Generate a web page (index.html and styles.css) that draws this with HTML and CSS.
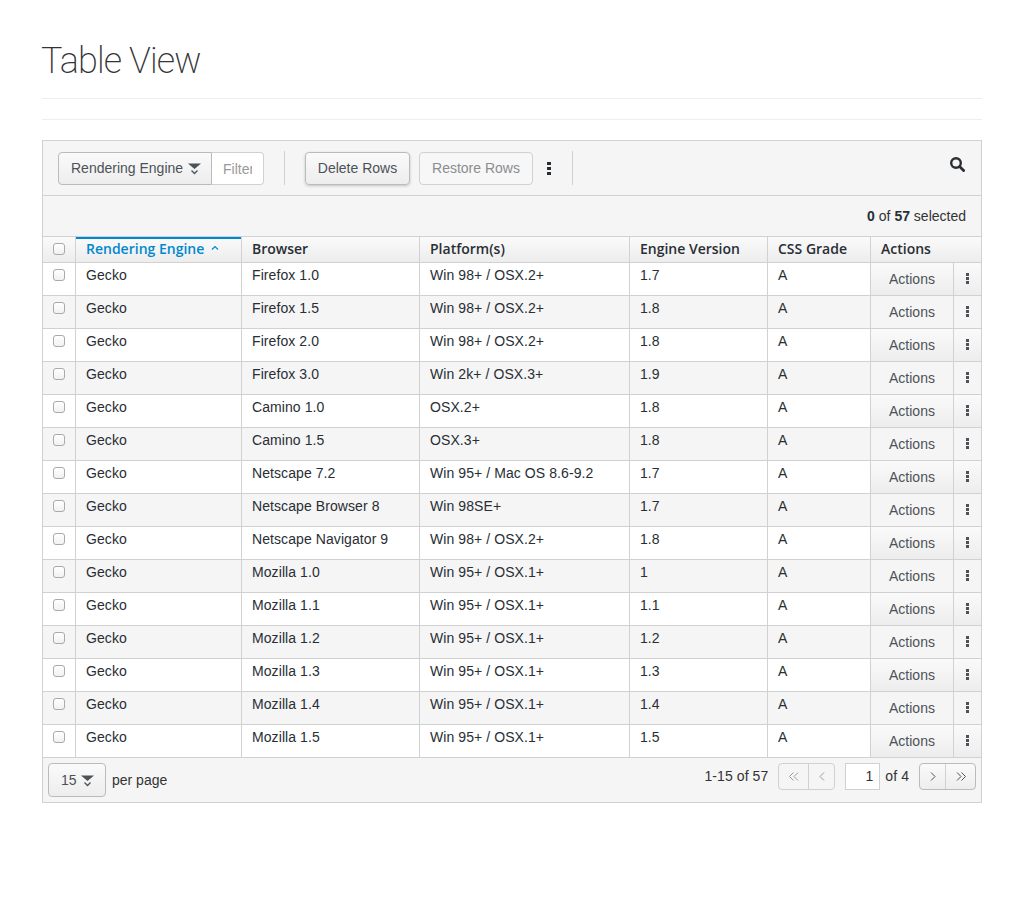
FILE: index.html
```html
<!DOCTYPE html>
<html lang="en">
<head>
<meta charset="utf-8">
<title>Table View</title>
<link rel="stylesheet" href="styles.css">
</head>
<body>
<main class="page">
  <header class="page-header"><h1>Table View</h1></header>
  <hr class="rule">
  <section class="card">
    <div class="toolbar">
      <div class="filter">
        <button class="btn filter-btn">Rendering Engine <svg class="caret" width="14" height="14" viewBox="0 0 14 14"><path d="M0 1.5h13L6.5 7z" fill="#4d5258"/><path d="M3.5 8.500l3 3 3-3" fill="none" stroke="#4d5258" stroke-width="1.3"/></svg></button>
        <div class="filter-input"><span>Filter</span></div>
      </div>
      <span class="divider divider-a"></span>
      <button class="btn delete">Delete Rows</button>
      <button class="btn restore">Restore Rows</button>
      <span class="kebab-wrap"><span class="kebab big"></span></span>
      <span class="divider divider-b"></span>
      <svg class="search" width="15" height="15" viewBox="0 0 15 15"><circle cx="6" cy="6" r="4.800" fill="none" stroke="#292e34" stroke-width="2.400"/><path d="M9.600 9.600l4 4" stroke="#292e34" stroke-width="2.800" stroke-linecap="round"/></svg>
    </div>
    <div class="selected"><span><b>0</b> of <b>57</b> selected</span></div>
    <table class="grid">
      <colgroup>
        <col class="w-check"><col class="w-engine"><col class="w-browser"><col class="w-platform"><col class="w-version"><col class="w-grade"><col class="w-act"><col class="w-more">
      </colgroup>
      <thead>
        <tr>
          <th class="c-check"><span class="check"></span></th>
          <th class="sorted">Rendering Engine <svg class="sort" width="8" height="6" viewBox="0 0 8 6"><path d="M1 4.500l3-3 3 3" fill="none" stroke="#0088ce" stroke-width="1.200"/></svg></th>
          <th>Browser</th>
          <th>Platform(s)</th>
          <th>Engine Version</th>
          <th>CSS Grade</th>
          <th class="c-actions" colspan="2">Actions</th>
        </tr>
      </thead>
      <tbody>
        <tr><td class="cc"><span class="check"></span></td><td>Gecko</td><td>Firefox 1.0</td><td>Win 98+ / OSX.2+</td><td>1.7</td><td>A</td><td class="act">Actions</td><td class="more"><span class="kebab"></span></td></tr>
        <tr><td class="cc"><span class="check"></span></td><td>Gecko</td><td>Firefox 1.5</td><td>Win 98+ / OSX.2+</td><td>1.8</td><td>A</td><td class="act">Actions</td><td class="more"><span class="kebab"></span></td></tr>
        <tr><td class="cc"><span class="check"></span></td><td>Gecko</td><td>Firefox 2.0</td><td>Win 98+ / OSX.2+</td><td>1.8</td><td>A</td><td class="act">Actions</td><td class="more"><span class="kebab"></span></td></tr>
        <tr><td class="cc"><span class="check"></span></td><td>Gecko</td><td>Firefox 3.0</td><td>Win 2k+ / OSX.3+</td><td>1.9</td><td>A</td><td class="act">Actions</td><td class="more"><span class="kebab"></span></td></tr>
        <tr><td class="cc"><span class="check"></span></td><td>Gecko</td><td>Camino 1.0</td><td>OSX.2+</td><td>1.8</td><td>A</td><td class="act">Actions</td><td class="more"><span class="kebab"></span></td></tr>
        <tr><td class="cc"><span class="check"></span></td><td>Gecko</td><td>Camino 1.5</td><td>OSX.3+</td><td>1.8</td><td>A</td><td class="act">Actions</td><td class="more"><span class="kebab"></span></td></tr>
        <tr><td class="cc"><span class="check"></span></td><td>Gecko</td><td>Netscape 7.2</td><td>Win 95+ / Mac OS 8.6-9.2</td><td>1.7</td><td>A</td><td class="act">Actions</td><td class="more"><span class="kebab"></span></td></tr>
        <tr><td class="cc"><span class="check"></span></td><td>Gecko</td><td>Netscape Browser 8</td><td>Win 98SE+</td><td>1.7</td><td>A</td><td class="act">Actions</td><td class="more"><span class="kebab"></span></td></tr>
        <tr><td class="cc"><span class="check"></span></td><td>Gecko</td><td>Netscape Navigator 9</td><td>Win 98+ / OSX.2+</td><td>1.8</td><td>A</td><td class="act">Actions</td><td class="more"><span class="kebab"></span></td></tr>
        <tr><td class="cc"><span class="check"></span></td><td>Gecko</td><td>Mozilla 1.0</td><td>Win 95+ / OSX.1+</td><td>1</td><td>A</td><td class="act">Actions</td><td class="more"><span class="kebab"></span></td></tr>
        <tr><td class="cc"><span class="check"></span></td><td>Gecko</td><td>Mozilla 1.1</td><td>Win 95+ / OSX.1+</td><td>1.1</td><td>A</td><td class="act">Actions</td><td class="more"><span class="kebab"></span></td></tr>
        <tr><td class="cc"><span class="check"></span></td><td>Gecko</td><td>Mozilla 1.2</td><td>Win 95+ / OSX.1+</td><td>1.2</td><td>A</td><td class="act">Actions</td><td class="more"><span class="kebab"></span></td></tr>
        <tr><td class="cc"><span class="check"></span></td><td>Gecko</td><td>Mozilla 1.3</td><td>Win 95+ / OSX.1+</td><td>1.3</td><td>A</td><td class="act">Actions</td><td class="more"><span class="kebab"></span></td></tr>
        <tr><td class="cc"><span class="check"></span></td><td>Gecko</td><td>Mozilla 1.4</td><td>Win 95+ / OSX.1+</td><td>1.4</td><td>A</td><td class="act">Actions</td><td class="more"><span class="kebab"></span></td></tr>
        <tr><td class="cc"><span class="check"></span></td><td>Gecko</td><td>Mozilla 1.5</td><td>Win 95+ / OSX.1+</td><td>1.5</td><td>A</td><td class="act">Actions</td><td class="more"><span class="kebab"></span></td></tr>
      </tbody>
    </table>
    <div class="footer">
      <div class="per-page">
        <button class="btn size">15 <svg class="caret" width="14" height="14" viewBox="0 0 14 14"><path d="M0 1.5h13L6.5 7z" fill="#4d5258"/><path d="M3.5 8.500l3 3 3-3" fill="none" stroke="#4d5258" stroke-width="1.3"/></svg></button>
        <span>per page</span>
      </div>
      <div class="pager">
        <span class="range">1-15 of 57</span>
        <div class="pg-group off">
          <span class="pg pg-wide"><svg width="10" height="9" viewBox="0 0 10 9"><path d="M4.500 .5l-4 4 4 4M9 .5l-4 4 4 4" fill="none" stroke="currentColor"/></svg></span>
          <span class="pg pg-mid"><svg width="6" height="9" viewBox="0 0 6 9"><path d="M5 .5l-4 4 4 4" fill="none" stroke="currentColor"/></svg></span>
        </div>
        <div class="pg-input">1</div>
        <span class="of">of 4</span>
        <div class="pg-group">
          <span class="pg pg-narrow"><svg width="6" height="9" viewBox="0 0 6 9"><path d="M1 .5l4 4-4 4" fill="none" stroke="currentColor"/></svg></span>
          <span class="pg pg-last"><svg width="10" height="9" viewBox="0 0 10 9"><path d="M1 .5l4 4-4 4M5.500 .5l4 4-4 4" fill="none" stroke="currentColor"/></svg></span>
        </div>
      </div>
    </div>
  </section>
</main>
</body>
</html>
```
FILE: styles.css
```css
* { box-sizing: border-box; }
body { margin: 0; background: #fff; color: #292e34; font: 14px/20px "Liberation Sans", Arial, sans-serif; }
.page { padding: 0 42px; }
.page-header { height: 99px; padding-top: 41px; border-bottom: 1px solid #eee; }
h1 { margin: 0 0 0 -1px; font: 200 36px/40px Roboto, "Liberation Sans", sans-serif; color: #333; letter-spacing: -.85px; }
.rule { height: 1px; border: 0; background: #eee; margin: 20px 0; }
.card { border: 1px solid #d1d1d1; background: #f5f5f5; height: 663px; }
.toolbar { height: 55px; border-bottom: 1px solid #d1d1d1; display: flex; align-items: center; padding: 0 15px; position: relative; }
.btn { height: 33px; padding: 0 12px; border: 1px solid #bbb; border-radius: 4px; background: linear-gradient(#fafafa, #ededed); color: #4d5258; font: 14px/20px "Liberation Sans", Arial, sans-serif; }
.filter { display: flex; }
.filter-btn { width: 154px; border-radius: 4px 0 0 4px; padding: 0 12px; text-align: left; white-space: nowrap; }
.caret { vertical-align: -3px; margin-left: 1px; }
.filter-input { width: 53px; height: 33px; margin-left: -1px; background: #fff; border: 1px solid #d1d1d1; border-left-color: #bbb; border-radius: 0 4px 4px 0; padding: 6px 0 0 11px; color: #999; overflow: hidden; }
.filter-input span { display: block; width: 29px; overflow: hidden; }
.divider { width: 1px; height: 34px; background: #d1d1d1; }
.divider-a { margin: 0 20px; }
.delete { width: 105px; padding: 0; box-shadow: 0 1px 3px rgba(0,0,0,.2); }
.restore { width: 114px; padding: 0; margin-left: 9px; background: #f7f7f7; border-color: #d1d1d1; color: #8b8d8f; }
.kebab-wrap { width: 32px; display: flex; justify-content: center; }
.kebab { display: block; width: 3px; height: 3px; background: #4d5258; box-shadow: 0 -4px 0 #4d5258, 0 4px 0 #4d5258; }
.kebab.big { width: 4px; height: 3px; background: #292e34; box-shadow: 0 -5px 0 #292e34, 0 5px 0 #292e34; }
.divider-b { margin-left: 7px; }
.search { position: absolute; right: 16px; top: 16px; }
.selected { height: 41px; border-bottom: 1px solid #d1d1d1; display: flex; justify-content: flex-end; align-items: center; padding: 0 15px 0 0; color: #333; }
.selected b { color: #292e34; }
.grid { width: 938px; table-layout: fixed; border-collapse: separate; border-spacing: 0; background: #fff; }
.w-check { width: 33px; }
.w-engine { width: 166px; }
.w-browser { width: 178px; }
.w-platform { width: 210px; }
.w-version { width: 138px; }
.w-grade { width: 103px; }
.w-act { width: 83px; }
.w-more { width: 27px; }
th { height: 26px; padding: 0 10px 2px; text-align: left; font: 600 14px/20px "Open Sans", sans-serif; color: #292e34; background: linear-gradient(#fafafa, #ededed); border-right: 1px solid #d1d1d1; border-bottom: 1px solid #d1d1d1; white-space: nowrap; }
th.c-check { padding: 0 0 4px; text-align: center; }
th.c-actions { border-right: 0; }
th.sorted { color: #0088ce; box-shadow: inset 0 2px 0 #0088ce; }
.sort { margin-left: 3px; vertical-align: 3px; }
td { height: 33px; padding: 2px 10px 0; vertical-align: top; border-right: 1px solid #d1d1d1; border-bottom: 1px solid #d1d1d1; line-height: 20px; letter-spacing: .08px; overflow: hidden; white-space: nowrap; }
tbody tr:nth-child(even) td { background: #f5f5f5; }
td.cc { padding: 6px 0 0; text-align: center; }
.check { display: inline-block; width: 12px; height: 12px; border: 1px solid #aaa; border-radius: 3px; background: linear-gradient(#fff, #f1f1f1); vertical-align: top; }
th .check { vertical-align: middle; }
tbody td.act { padding: 6px 0 0; text-align: center; color: #4d5258; letter-spacing: 0; background: linear-gradient(#fafafa, #ededed); }
tbody td.more { padding: 0; border-right: 0; background: linear-gradient(#fafafa, #ededed); }
td.more .kebab { margin: 14px auto 0; }
.footer { height: 44px; display: flex; justify-content: space-between; padding: 5px 5px 0; }
.per-page { display: flex; align-items: center; height: 34px; color: #333; }
.size { width: 58px; height: 34px; padding: 0 0 0 12px; text-align: left; margin-right: 6px; white-space: nowrap; }
.pager { display: flex; align-items: flex-start; height: 27px; letter-spacing: .08px; }
.range { line-height: 26px; margin-right: 10px; color: #333; }
.pg-group { display: flex; height: 27px; border: 1px solid #bbb; border-radius: 4px; background: linear-gradient(#fafafa, #ededed); color: #4d5258; }
.pg-group.off { border-color: #d1d1d1; color: #9c9c9c; background: #f5f5f5; }
.pg { display: flex; align-items: center; justify-content: center; }
.pg + .pg { border-left: 1px solid #d1d1d1; }
.pg-wide { width: 29px; }
.pg-mid { width: 26px; }
.pg-narrow { width: 25px; }
.pg-last { width: 30px; }
.pg-input { width: 35px; height: 27px; margin-left: 10px; background: #fff; border: 1px solid #d1d1d1; text-align: right; padding-right: 6px; line-height: 25px; color: #333; }
.of { line-height: 26px; margin: 0 10px 0 5px; color: #333; }
```
